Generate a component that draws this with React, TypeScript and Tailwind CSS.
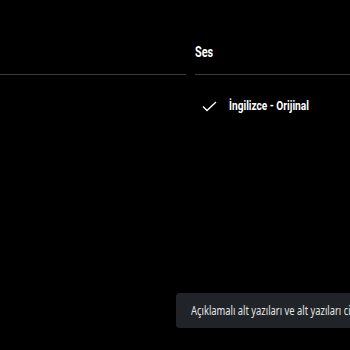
import React from "react";

export default function App() {
  return (
    <div className="relative w-[350px] h-[350px] bg-black overflow-hidden" style={{ fontFamily: "Roboto, 'Noto Sans', sans-serif" }}>
      <div className="flex">
        <div className="w-[186px] h-[75px] border-b border-[#3a3a3a]" />
        <div className="ml-[9px] flex-1">
          <div className="h-[75px] border-b border-[#3a3a3a] pt-[40px]">
            <span className="inline-block origin-left scale-x-[0.78] text-[14px] leading-[18px] font-bold text-white">Ses</span>
          </div>
          <div className="flex items-center h-[30px] mt-[16px] pl-[7px]">
            <svg width="15" height="11" viewBox="0 0 15 11" className="shrink-0">
              <path d="M1 5.5 L5 9.5 L14 1" fill="none" stroke="#ffffff" strokeWidth="1.4" />
            </svg>
            <span className="ml-[12px] inline-block origin-left scale-x-[0.78] whitespace-nowrap text-[13px] font-bold text-white leading-[16px]">İngilizce - Orijinal</span>
          </div>
        </div>
      </div>
      <div className="absolute left-[176px] top-[293px] w-[220px] h-[35px] rounded-[4px] bg-[#202327] flex items-center pl-[15px] whitespace-nowrap">
        <span className="inline-block origin-left scale-x-[0.78] text-[12px] text-[#e6e6e6]" style={{ fontFamily: "'Noto Sans', sans-serif" }}>Açıklamalı alt yazıları ve alt yazıları ciddi</span>
      </div>
    </div>
  );
}
